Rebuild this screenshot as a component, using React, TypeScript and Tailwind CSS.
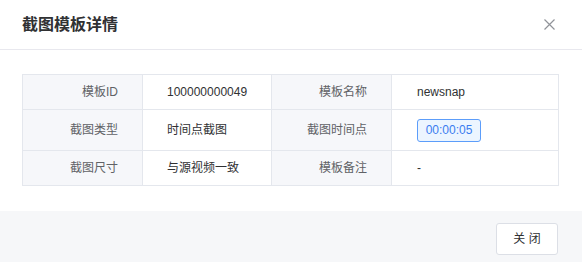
const rows: { label: string; value: React.ReactNode; label2: string; value2: React.ReactNode; tall?: boolean }[] = [
  { label: '模板ID', value: '100000000049', label2: '模板名称', value2: 'newsnap' },
  {
    label: '截图类型',
    value: '时间点截图',
    label2: '截图时间点',
    value2: (
      <span className="inline-flex h-[23px] w-[64px] items-center justify-center rounded-[3px] border border-[#5c9dfa] bg-[#ecf5ff] text-[12px] text-[#3a7cf0]">
        00:00:05
      </span>
    ),
    tall: true,
  },
  { label: '截图尺寸', value: '与源视频一致', label2: '模板备注', value2: '-' },
];

const App = () => {
  return (
    <div className="flex h-[262px] w-[582px] flex-col bg-white font-['Liberation_Sans','Noto_Sans_CJK_SC',sans-serif] text-[#303133]">
      {/* header */}
      <div className="flex h-[50px] items-center justify-between border-b border-[#e8e8ee] pl-[22px] pr-[27px]">
        <h2 className="text-[16px] font-bold text-[#303133]">截图模板详情</h2>
        <button className="flex h-[12px] w-[12px] items-center justify-center text-[#909399]">
          <svg width="11" height="11" viewBox="0 0 11 11" fill="none" stroke="currentColor" strokeWidth="1.2">
            <path d="M0.5 0.5L10.5 10.5M10.5 0.5L0.5 10.5" />
          </svg>
        </button>
      </div>

      {/* body */}
      <div className="px-[22px] pt-[24px] pb-[25px]">
        <table className="w-[536px] table-fixed border-collapse text-[12px]">
          <colgroup>
            <col className="w-[120px]" />
            <col className="w-[129px]" />
            <col className="w-[120px]" />
            <col className="w-[167px]" />
          </colgroup>
          <tbody>
            {rows.map((r) => (
              <tr key={r.label} className={r.tall ? 'h-[41px]' : 'h-[35px]'}>
                <td className="border border-[#e4e7ed] bg-[#f6f7fa] pr-[24px] text-right text-[#606266]">{r.label}</td>
                <td className="border border-[#e4e7ed] pl-[24px] text-[#303133]">{r.value}</td>
                <td className="border border-[#e4e7ed] bg-[#f6f7fa] pr-[24px] text-right text-[#606266]">{r.label2}</td>
                <td className="border border-[#e4e7ed] pl-[25px] text-[#303133]">{r.value2}</td>
              </tr>
            ))}
          </tbody>
        </table>
      </div>

      {/* footer */}
      <div className="flex flex-1 items-start justify-end bg-[#f6f7f9] pr-[24px] pt-[12px]">
        <button className="h-[32px] w-[62px] rounded-[3px] border border-[#dcdfe6] bg-white text-[12px] text-[#303133]">
          关 闭
        </button>
      </div>
    </div>
  );
};

export default App;
